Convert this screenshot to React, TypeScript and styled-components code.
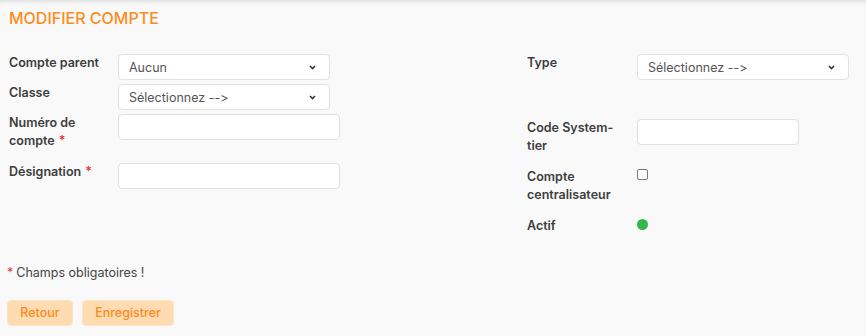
import React from 'react';
import styled, { createGlobalStyle } from 'styled-components';

const GlobalStyle = createGlobalStyle`
  html, body {
    margin: 0;
    padding: 0;
    background: #f9f9f9;
  }
  body {
    font-family: Inter, "Open Sans", sans-serif;
    font-feature-settings: "calt" 0, "liga" 0;
    color: #3b3b3b;
  }
`;

const Page = styled.div`
  width: 866px;
  height: 336px;
  box-sizing: border-box;
  padding: 9px 9px 0 9px;
  background: #f9f9f9;
  box-shadow: inset 0 5px 6px -5px rgba(0, 0, 0, 0.18);
  overflow: hidden;
`;

const Title = styled.h1`
  margin: 0;
  font-size: 16px;
  line-height: 18px;
  font-weight: 500;
  color: #fd8c1c;
`;

const Columns = styled.div`
  display: grid;
  grid-template-columns: 518px 1fr;
  margin-top: 27px;
`;

const Column = styled.div`
  display: flex;
  flex-direction: column;
`;

const Row = styled.div<{ $mb?: number }>`
  display: flex;
  align-items: flex-start;
  margin-bottom: ${p => p.$mb ?? 0}px;
`;

const Label = styled.label<{ $w?: number }>`
  width: ${p => p.$w ?? 109}px;
  flex: none;
  box-sizing: border-box;
  padding-right: 8px;
  font-size: 12.5px;
  line-height: 17.5px;
  font-weight: 600;
  color: #3d3d3d;
`;

const Required = styled.span`
  color: #e8343a;
  margin-left: 4px;
`;

const Select = styled.div<{ $w: number }>`
  width: ${p => p.$w}px;
  height: 26px;
  box-sizing: border-box;
  background: #fff;
  border: 1px solid #e2e2e2;
  border-radius: 4px;
  display: flex;
  align-items: center;
  justify-content: space-between;
  padding: 0 13px 0 10px;
  font-size: 12.5px;
  color: #555;
`;

const Input = styled.div<{ $w: number }>`
  width: ${p => p.$w}px;
  height: 26px;
  box-sizing: border-box;
  background: #fff;
  border: 1px solid #e0e0e0;
  border-radius: 4px;
`;

const Checkbox = styled.span`
  display: block;
  width: 11px;
  height: 11px;
  box-sizing: border-box;
  border: 1px solid #777;
  border-radius: 2px;
  background: #fff;
  margin-top: 1px;
`;

const Dot = styled.span`
  display: block;
  width: 11px;
  height: 11px;
  border-radius: 50%;
  background: #36b54a;
  margin-top: 2px;
`;

const Note = styled.p`
  margin: 29px 0 0 -2px;
  font-size: 12.5px;
  line-height: 18px;
  color: #444;
`;

const Star = styled.span`
  color: #e8343a;
  margin-right: 3px;
`;

const Actions = styled.div`
  display: flex;
  gap: 9px;
  margin-top: 18px;
  margin-left: -2px;
`;

const Button = styled.button<{ $w: number }>`
  width: ${p => p.$w}px;
  height: 26px;
  padding: 0;
  border: 1px solid #fde3c4;
  border-radius: 4px;
  background: #ffdbb2;
  color: #fb8b1c;
  font-family: inherit;
  font-size: 12.5px;
  font-weight: 500;
  cursor: pointer;
`;

const Chevron = () => (
  <svg width="7" height="5" viewBox="0 0 7 5">
    <path d="M1 1 L3.5 3.5 L6 1" fill="none" stroke="#333" strokeWidth="1.6" />
  </svg>
);

export default function App() {
  return (
    <>
      <GlobalStyle />
      <Page>
        <Title>MODIFIER COMPTE</Title>
        <Columns>
          <Column>
            <Row $mb={4}>
              <Label>Compte parent</Label>
              <Select $w={212}>
                Aucun
                <Chevron />
              </Select>
            </Row>
            <Row $mb={4}>
              <Label>Classe</Label>
              <Select $w={212}>
                Sélectionnez --&gt;
                <Chevron />
              </Select>
            </Row>
            <Row $mb={14}>
              <Label>
                Numéro de
                <br />
                compte<Required>*</Required>
              </Label>
              <Input $w={222} />
            </Row>
            <Row>
              <Label>
                Désignation<Required>*</Required>
              </Label>
              <Input $w={222} />
            </Row>
          </Column>
          <Column>
            <Row $mb={39}>
              <Label $w={110}>Type</Label>
              <Select $w={212}>
                Sélectionnez --&gt;
                <Chevron />
              </Select>
            </Row>
            <Row $mb={14}>
              <Label $w={110}>
                Code System-
                <br />
                tier
              </Label>
              <Input $w={162} />
            </Row>
            <Row $mb={14}>
              <Label $w={110}>
                Compte
                <br />
                centralisateur
              </Label>
              <Checkbox />
            </Row>
            <Row>
              <Label $w={110}>Actif</Label>
              <Dot />
            </Row>
          </Column>
        </Columns>
        <Note>
          <Star>*</Star>Champs obligatoires !
        </Note>
        <Actions>
          <Button $w={66}>Retour</Button>
          <Button $w={92}>Enregistrer</Button>
        </Actions>
      </Page>
    </>
  );
}
